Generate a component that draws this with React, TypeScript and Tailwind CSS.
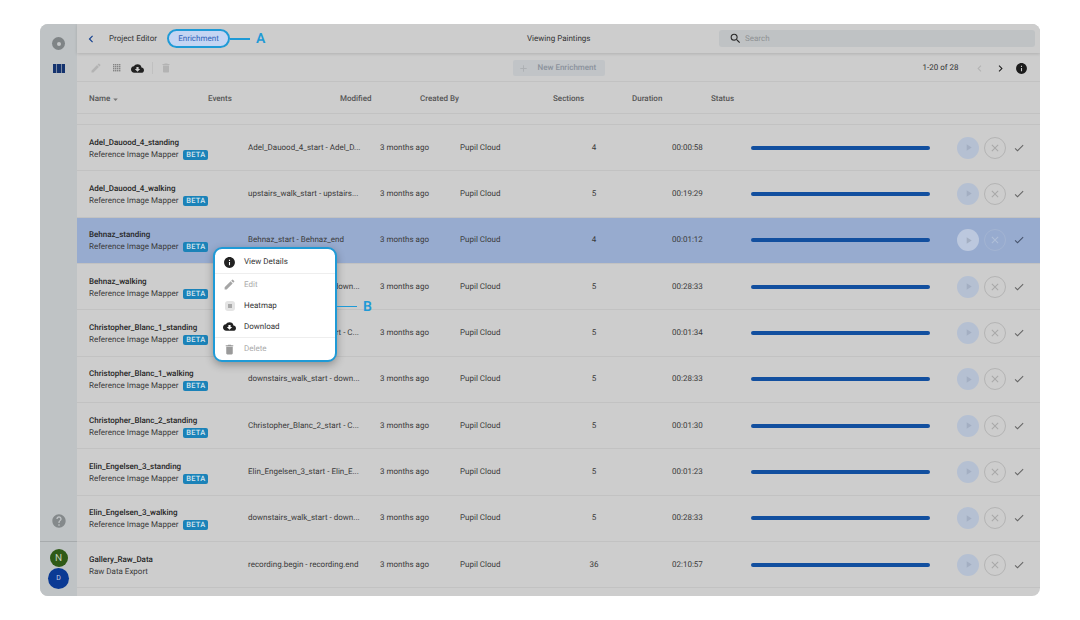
import { MdArrowDropDown, MdChevronLeft, MdChevronRight, MdClose, MdCloudDownload, MdDelete, MdEdit, MdHelp, MdInfo, MdPlayArrow, MdAdd, MdSearch, MdCheck } from "react-icons/md";

const rows = [
    { name: "Adel_Dauood_4_standing", events: "Adel_Dauood_4_start - Adel_D...", sections: 4, duration: "00:00:58" },
    { name: "Adel_Dauood_4_walking", events: "upstairs_walk_start - upstairs...", sections: 5, duration: "00:19:29" },
    { name: "Behnaz_standing", events: "Behnaz_start - Behnaz_end", sections: 4, duration: "00:01:12", selected: true },
    { name: "Behnaz_walking", events: "downstairs_walk_start - down...", sections: 5, duration: "00:28:33" },
    { name: "Christopher_Blanc_1_standing", events: "Christopher_Blanc_1_start - C...", sections: 5, duration: "00:01:34" },
    { name: "Christopher_Blanc_1_walking", events: "downstairs_walk_start - down...", sections: 5, duration: "00:28:33" },
    { name: "Christopher_Blanc_2_standing", events: "Christopher_Blanc_2_start - C...", sections: 5, duration: "00:01:30" },
    { name: "Elin_Engelsen_3_standing", events: "Elin_Engelsen_3_start - Elin_E...", sections: 5, duration: "00:01:23" },
    { name: "Elin_Engelsen_3_walking", events: "downstairs_walk_start - down...", sections: 5, duration: "00:28:33" },
    { name: "Gallery_Raw_Data", events: "recording.begin - recording.end", sections: 36, duration: "02:10:57", raw: true },
];

/** Square of small dots, used for the heatmap action. */
function DotGrid({ className }: { className?: string }) {
    const cells = [1, 3.5, 6, 8.5];
    return (
        <svg viewBox="0 0 10 10" className={className} fill="currentColor">
            {cells.map((y) => cells.map((x) => <rect key={`${x}-${y}`} x={x - 0.6} y={y - 0.6} width="1.2" height="1.2" />))}
        </svg>
    );
}

function Row({ row }: { row: (typeof rows)[number] }) {
    return (
        <div className={`flex h-[46.33px] shrink-0 items-center border-b border-[#c2c2c2] pl-3 ${row.selected ? "bg-[#97abcf]" : ""}`}>
            <div className="w-[159px] shrink-0 pt-[2px]">
                <div className="text-[8px] leading-[12px] font-medium text-[#262626]">{row.name}</div>
                <div className="flex items-center text-[8px] leading-[12px] text-[#3a3a3a]">
                    {row.raw ? "Raw Data Export" : "Reference Image Mapper"}
                    {!row.raw && (
                        <span className="ml-[5px] rounded-[2px] bg-[#1b82b8] px-[3px] text-[7.5px] leading-[10px] font-medium tracking-[0.2px] text-[#d6e6ef]">BETA</span>
                    )}
                </div>
            </div>
            <div className="w-[132px] shrink-0 text-[8px] text-[#3a3a3a]">{row.events}</div>
            <div className="w-[80px] shrink-0 text-[8px] text-[#3a3a3a]">3 months ago</div>
            <div className="w-[104px] shrink-0 text-[8px] text-[#3a3a3a]">Pupil Cloud</div>
            <div className="w-[60px] shrink-0 text-center text-[8px] text-[#3a3a3a]">{row.sections}</div>
            <div className="w-[127px] shrink-0 pl-[48px] text-[8px] text-[#3a3a3a]">{row.duration}</div>
            <div className="h-[4px] w-[179px] shrink-0 rounded-full bg-[#124f9f]" />
            <div className={`ml-[27px] flex h-[22px] w-[22px] shrink-0 items-center justify-center rounded-full ${row.selected ? "bg-[#bcc8de]" : "bg-[#b5c0d2]"}`}>
                <MdPlayArrow className="text-[11px] text-[#a3aec2]" />
            </div>
            <div className={`ml-[5px] flex h-[22px] w-[22px] shrink-0 items-center justify-center rounded-full border ${row.selected ? "border-[#a3b4d2]" : "border-[#b4b4b4]"}`}>
                <MdClose className={`text-[12px] ${row.selected ? "text-[#b0bfd8]" : "text-[#a8a8a8]"}`} />
            </div>
            <MdCheck className={`ml-[7px] shrink-0 text-[12px] ${row.selected ? "text-[#46536c]" : "text-[#666666]"}`} />
        </div>
    );
}

function RowMenu() {
    return (
        <div className="absolute top-[247px] left-[213px] h-[115px] w-[124px] rounded-[9px] border-2 border-[#1f9ad6] bg-white pt-[2px] shadow-[0_3px_8px_rgba(0,0,0,0.3)]">
            <div className="flex h-[23px] items-center border-b border-[#eeeeee] pl-[8px] text-[8px] text-[#333333]">
                <MdInfo className="mr-[8px] text-[13px] text-[#222222]" />
                View Details
            </div>
            <div className="flex h-[21px] items-center pl-[8px] text-[8px] text-[#aaaaaa]">
                <MdEdit className="mr-[8px] text-[13px] text-[#a5a5a5]" />
                Edit
            </div>
            <div className="flex h-[21px] items-center pl-[8px] text-[8px] text-[#333333]">
                <span className="mr-[9.5px] ml-[1.5px] flex h-[10px] w-[10px] items-center justify-center rounded-[3px] bg-[#e4e4e4]">
                    <span className="h-[4px] w-[4px] bg-[#a9a9a9]" />
                </span>
                Heatmap
            </div>
            <div className="flex h-[22px] items-center border-b border-[#eeeeee] pl-[8px] text-[8px] text-[#333333]">
                <MdCloudDownload className="mr-[8px] text-[13px] text-[#222222]" />
                Download
            </div>
            <div className="flex h-[22px] items-center pl-[8px] text-[8px] text-[#aaaaaa]">
                <MdDelete className="mr-[8px] text-[13px] text-[#9a9a9a]" />
                Delete
            </div>
        </div>
    );
}

export default function App() {
    return (
        <div className="relative h-[620px] w-[1080px] bg-white font-['Roboto',sans-serif] [text-rendering:geometricPrecision]">
            <div className="absolute top-[24px] left-[40px] flex h-[572px] w-[1000px] overflow-hidden rounded-[8px] bg-[#cdcdcd]">
                {/* Sidebar */}
                <aside className="flex w-[37px] shrink-0 flex-col items-center bg-[#bfc3c5]">
                    <div className="mt-[13px] flex h-[13px] w-[13px] items-center justify-center rounded-full bg-[#7f8486]">
                        <span className="h-[4px] w-[4px] rounded-full bg-[#c3c6c8]" />
                    </div>
                    <svg viewBox="0 0 12 9" className="mt-[14px] h-[9px] w-[12px]" fill="#14336f">
                        <rect x="0" y="0" width="3" height="9" />
                        <rect x="3.6" y="0" width="4.8" height="9" />
                        <rect x="9" y="0" width="3" height="9" />
                    </svg>
                    <MdHelp className="mt-auto mb-[12px] text-[16px] text-[#84898b]" />
                    <div className="flex w-full flex-col items-center border-t border-[#a7abad] pt-[7px] pb-[7px]">
                        <div className="flex h-[18px] w-[18px] items-center justify-center rounded-full bg-[#2f5a17] text-[10px] text-[#c3cfbb]">N</div>
                        <div className="mt-[1px] flex h-[21px] w-[21px] items-center justify-center rounded-full bg-[#0b3a94] text-[7px] text-[#c7d1e6]">D</div>
                    </div>
                </aside>

                <main className="flex min-w-0 flex-1 flex-col">
                    {/* Top bar */}
                    <header className="flex h-[29px] shrink-0 items-center bg-[#cdcdcd] pr-[5px] shadow-[0_1px_3px_rgba(0,0,0,0.14)]">
                        <MdChevronLeft className="ml-[7px] text-[14px] text-[#123f8f]" />
                        <span className="ml-[11px] w-[48px] text-[8px] whitespace-nowrap text-[#333333]">Project Editor</span>
                        <span className="ml-[10px] flex h-[19px] w-[63px] items-center justify-center rounded-full border-2 border-[#1f9ad6] bg-[#c4d5f3] text-[8px] text-[#2e62b8]">Enrichment</span>
                        <span className="ml-[297px] w-[63px] text-[8px] whitespace-nowrap text-[#333333]">Viewing Paintings</span>
                        <div className="ml-[129px] flex h-[17px] flex-1 items-center rounded-[3px] bg-[#bfc2c4] pl-[10px]">
                            <MdSearch className="text-[13px] text-[#2b2b2b]" />
                            <span className="ml-[3px] text-[8px] text-[#8f9294]">Search</span>
                        </div>
                    </header>

                    {/* Toolbar */}
                    <div className="flex h-[29px] shrink-0 items-center border-b border-[#c2c2c2] pt-[2px] pr-[12px] pl-[13px]">
                        <MdEdit className="text-[12px] text-[#b3b3b3]" />
                        <DotGrid className="ml-[10.5px] h-[8px] w-[8px] text-[#333333]" />
                        <MdCloudDownload className="ml-[10px] text-[13px] text-[#222222]" />
                        <span className="ml-[8px] h-[12px] w-px bg-[#c0c0c0]" />
                        <MdDelete className="ml-[7px] text-[12px] text-[#b3b3b3]" />
                        <div className="ml-[341px] flex h-[16px] w-[92px] items-center rounded-[2px] bg-[#c1c4c7] pl-[5px] text-[8px] font-medium text-[#8b929c]">
                            <MdAdd className="mr-[9px] text-[11px] text-[#adb0b3]" />
                            New Enrichment
                        </div>
                        <span className="ml-auto text-[8px] text-[#333333]">1-20 of 28</span>
                        <MdChevronLeft className="ml-[14.5px] text-[13px] text-[#b4b4b4]" />
                        <MdChevronRight className="ml-[8px] text-[13px] text-[#222222]" />
                        <MdInfo className="ml-[8px] text-[13px] text-[#1c1c1c]" />
                    </div>

                    {/* Column headers */}
                    <div className="flex h-[32px] shrink-0 items-center border-b border-[#c2c2c2] pt-[3px] pl-3 text-[8px] font-medium text-[#555555]">
                        <span className="flex w-[119px] items-center">
                            Name
                            <MdArrowDropDown className="text-[11px] text-[#777777]" />
                        </span>
                        <span className="w-[132px]">Events</span>
                        <span className="w-[80px]">Modified</span>
                        <span className="w-[133px]">Created By</span>
                        <span className="w-[79px]">Sections</span>
                        <span className="w-[79px]">Duration</span>
                        <span>Status</span>
                    </div>

                    {/* Table */}
                    <div className="mt-[10px] flex flex-col border-t border-[#c2c2c2]">
                        {rows.map((row) => (
                            <Row key={row.name} row={row} />
                        ))}
                    </div>
                </main>
            </div>

            <RowMenu />

            {/* Callouts */}
            <span className="absolute top-[38px] left-[230px] h-[2px] w-[20px] bg-[#1f9ad6]" />
            <span className="absolute top-[29px] left-[256px] text-[14px] font-semibold text-[#1f9ad6]">A</span>
            <span className="absolute top-[305.5px] left-[337px] h-[1.5px] w-[20px] bg-[#1f9ad6]" />
            <span className="absolute top-[297px] left-[363px] text-[14px] font-semibold text-[#1f9ad6]">B</span>
        </div>
    );
}
